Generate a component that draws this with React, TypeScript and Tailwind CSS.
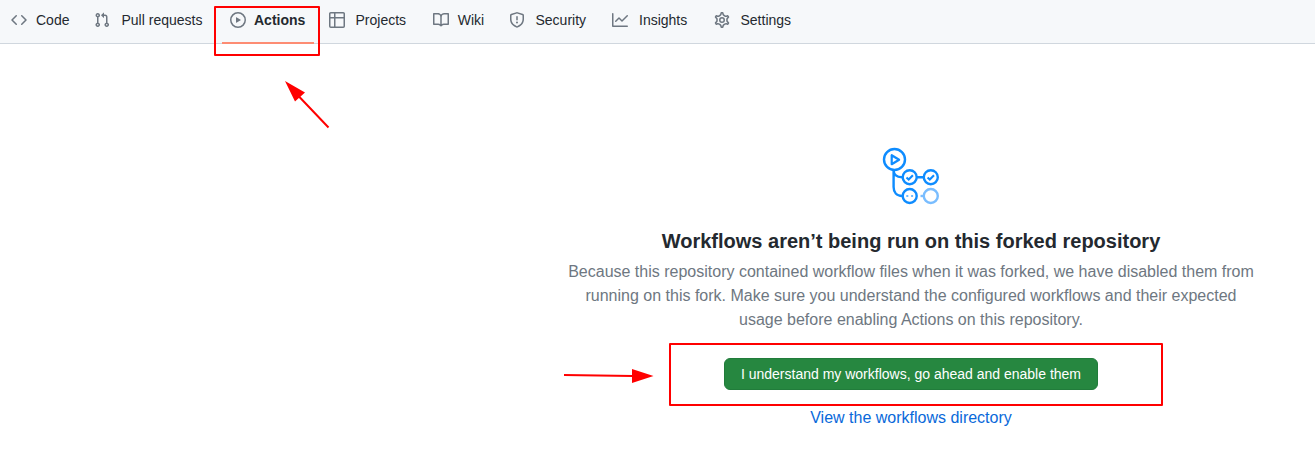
import React from "react";

const PATHS = {
  code: "M4.72 3.22a.75.75 0 011.06 1.06L2.06 8l3.72 3.72a.75.75 0 11-1.06 1.06L.47 8.53a.75.75 0 010-1.06l4.25-4.25zm6.56 0a.75.75 0 10-1.06 1.06L13.94 8l-3.72 3.72a.75.75 0 101.06 1.06l4.25-4.25a.75.75 0 000-1.06l-4.25-4.25z",
  pull: "M7.177 3.073L9.573.677A.25.25 0 0110 .854v4.792a.25.25 0 01-.427.177L7.177 3.427a.25.25 0 010-.354zM3.75 2.5a.75.75 0 100 1.5.75.75 0 000-1.5zm-2.25.75a2.25 2.25 0 113 2.122v5.256a2.251 2.251 0 11-1.5 0V5.372A2.25 2.25 0 011.5 3.25zM11 2.5h-1V4h1a1 1 0 011 1v5.628a2.251 2.251 0 101.5 0V5A2.5 2.5 0 0011 2.5zm1 10.25a.75.75 0 111.5 0 .75.75 0 01-1.5 0zM3.75 12a.75.75 0 100 1.5.75.75 0 000-1.5z",
  play: "M1.5 8a6.5 6.5 0 1113 0 6.5 6.5 0 01-13 0zM8 0a8 8 0 100 16A8 8 0 008 0zM6.379 5.227A.25.25 0 006 5.442v5.117a.25.25 0 00.379.214l4.264-2.559a.25.25 0 000-.428L6.379 5.227z",
  table:
    "M0 1.75C0 .784.784 0 1.75 0h12.5C15.216 0 16 .784 16 1.75v12.5A1.75 1.75 0 0114.25 16H1.75A1.75 1.75 0 010 14.25V1.75zM1.5 6.5v7.75c0 .138.112.25.25.25H5v-8H1.5zM6.5 6.5v8h7.75a.25.25 0 00.25-.25V6.5h-8zM14.5 5V1.75a.25.25 0 00-.25-.25H6.5V5h8zM5 5V1.5H1.75a.25.25 0 00-.25.25V5H5z",
  book: "M0 1.75A.75.75 0 01.75 1h4.253c1.227 0 2.317.59 3 1.501A3.744 3.744 0 0111.006 1h4.245a.75.75 0 01.75.75v10.5a.75.75 0 01-.75.75h-4.507a2.25 2.25 0 00-1.591.659l-.622.621a.75.75 0 01-1.06 0l-.622-.621A2.25 2.25 0 005.258 13H.75a.75.75 0 01-.75-.75V1.75zm8.755 3a2.25 2.25 0 012.25-2.25H14.5v9h-3.757c-.71 0-1.4.201-1.992.572l.004-7.322zm-1.504 7.324l.004-5.073-.002-2.253A2.25 2.25 0 005.003 2.5H1.5v9h3.757a3.75 3.75 0 011.994.574z",
  shield:
    "M7.467.133a1.75 1.75 0 011.066 0l5.25 1.68A1.75 1.75 0 0115 3.48V7c0 1.566-.32 3.182-1.303 4.682-.983 1.498-2.585 2.813-5.032 3.855a1.7 1.7 0 01-1.33 0c-2.447-1.042-4.049-2.357-5.032-3.855C1.32 10.182 1 8.566 1 7V3.48a1.75 1.75 0 011.217-1.667l5.25-1.68zm.61 1.429a.25.25 0 00-.153 0l-5.25 1.68a.25.25 0 00-.174.238V7c0 1.358.275 2.666 1.057 3.86.784 1.194 2.121 2.34 4.366 3.297a.2.2 0 00.154 0c2.245-.956 3.582-2.104 4.366-3.298C13.225 9.666 13.5 8.36 13.5 7V3.48a.25.25 0 00-.174-.237l-5.25-1.68zM9 10.5a1 1 0 11-2 0 1 1 0 012 0zm-.25-5.75a.75.75 0 10-1.5 0v3a.75.75 0 001.5 0v-3z",
  graph:
    "M1.5 1.75a.75.75 0 00-1.5 0v12.5c0 .414.336.75.75.75h14.5a.75.75 0 000-1.5H1.5V1.75zm14.28 2.53a.75.75 0 00-1.06-1.06L10 7.94 7.53 5.47a.75.75 0 00-1.06 0L3.22 8.72a.75.75 0 001.06 1.06L7 7.06l2.47 2.47a.75.75 0 001.06 0l5.25-5.25z",
};

const GEAR =
  "M7.429 1.525a6.593 6.593 0 011.142 0c.036.003.108.036.137.146l.289 1.105c.147.56.55.967.997 1.189.174.086.341.183.501.29.417.278.97.423 1.53.27l1.102-.303c.11-.03.175.016.195.046.219.31.41.641.573.989.014.031.022.11-.059.19l-.815.806c-.411.406-.562.957-.53 1.456a4.588 4.588 0 010 .582c-.032.499.119 1.05.53 1.456l.815.806c.08.08.073.159.059.19a6.494 6.494 0 01-.573.99c-.02.029-.086.074-.195.045l-1.103-.303c-.559-.153-1.112-.008-1.529.27-.16.107-.327.204-.5.29-.449.222-.851.628-.998 1.189l-.289 1.105c-.029.11-.101.143-.137.146a6.613 6.613 0 01-1.142 0c-.036-.003-.108-.037-.137-.146l-.289-1.105c-.147-.56-.55-.967-.997-1.189a4.502 4.502 0 01-.501-.29c-.417-.278-.97-.423-1.53-.27l-1.102.303c-.11.03-.175-.016-.195-.046a6.492 6.492 0 01-.573-.989c-.014-.031-.022-.11.059-.19l.815-.806c.411-.406.562-.957.53-1.456a4.587 4.587 0 010-.582c.032-.499-.119-1.05-.53-1.456l-.815-.806c-.08-.08-.073-.159-.059-.19a6.44 6.44 0 01.573-.99c.02-.029.086-.075.195-.045l1.103.303c.559.153 1.112.008 1.529-.27.16-.107.327-.204.5-.29.449-.222.851-.628.998-1.189l.289-1.105c.029-.11.101-.143.137-.146z";

type IconName = keyof typeof PATHS | "gear";

function Icon({ name }: { name: IconName }) {
  return (
    <svg viewBox="0 0 16 16" className="size-4 shrink-0 text-[#6e7781]" fill="currentColor">
      {name === "gear" ? (
        <g fill="none" stroke="currentColor" strokeWidth="1.4">
          <path d={GEAR} transform="translate(8 8) scale(1.1) translate(-8 -8)" />
          <circle cx="8" cy="8" r="2.25" strokeWidth="1.5" />
        </g>
      ) : (
        <path fillRule="evenodd" d={PATHS[name]} />
      )}
    </svg>
  );
}

const TABS: { name: IconName; label: string; box: string; active?: boolean }[] = [
  { name: "code", label: "Code", box: "w-[83px] gap-[9px]" },
  { name: "pull", label: "Pull requests", box: "w-[136px] gap-[11.5px]" },
  { name: "play", label: "Actions", box: "w-[99px] gap-2", active: true },
  { name: "table", label: "Projects", box: "w-[104px] gap-[10.5px]" },
  { name: "book", label: "Wiki", box: "w-[76px] gap-[8.75px]" },
  { name: "shield", label: "Security", box: "w-[103px] gap-[10.5px]" },
  { name: "graph", label: "Insights", box: "w-[102px] gap-[11px]" },
  { name: "gear", label: "Settings", box: "w-[90px] gap-[10.5px]" },
];

function WorkflowLogo() {
  return (
    <svg className="h-[58px] w-[58px]" viewBox="882 147 58 58" fill="none" stroke="#0e8cff" strokeWidth="2.4">
      <circle cx="894.5" cy="159.5" r="10.5" />
      <path d="M891.7 155.2v9l7.400-4.500z" strokeLinejoin="round" strokeWidth="2.2" />
      <path d="M893.6 170v17c0 5.5 3 9 8.5 9M893.6 170c0 4.500 3 7.200 8.500 7.200M917 177.200h6.500" />
      <circle cx="909.7" cy="177.200" r="7" />
      <circle cx="930.800" cy="177.200" r="7" />
      <circle cx="909.700" cy="196" r="7" />
      <path d="M906.500 177.500l2.200 2.100 4.200-4.300M927.600 177.500l2.200 2.100 4.200-4.300" strokeWidth="2.100" />
      <path d="M906.300 196h2M911.100 196h2" strokeWidth="2" opacity=".6" />
      <g stroke="#79bdff">
        <circle cx="930.800" cy="196" r="7" />
        <path d="M920.500 196h3" />
      </g>
    </svg>
  );
}

export default function App() {
  return (
    <div className="relative h-[464px] w-[1315px] overflow-hidden bg-white font-['Liberation_Sans',Arial,sans-serif]">
      <nav className="flex h-11 border-b border-[#d0d7de] bg-[#f6f8fa] pl-[11px]">
        {TABS.map((t) => (
          <div
            key={t.label}
            className={`relative flex h-10 shrink-0 items-center whitespace-nowrap text-sm text-[#24292f] ${t.box} ${t.active ? "font-bold" : ""}`}
          >
            <Icon name={t.name} />
            <span>{t.label}</span>
            {t.active && <span className="absolute -left-2 top-[42px] h-0.5 w-[92px] bg-[#fd8c73]" />}
          </div>
        ))}
      </nav>

      <main className="ml-[563px] flex w-[696px] flex-col items-center pt-[103px] text-center">
        <WorkflowLogo />
        <h1 className="mt-[21px] text-xl leading-[30px] font-bold text-[#24292f]">
          Workflows aren’t being run on this forked repository
        </h1>
        <p className="mt-1 text-base text-[#6e7781]">
          Because this repository contained workflow files when it was forked, we have disabled them from
          <br />
          running on this fork. Make sure you understand the configured workflows and their expected
          <br />
          usage before enabling Actions on this repository.
        </p>
        <button className="mt-[26px] h-8 w-[374px] rounded-md border border-[#217c3b] bg-[#268740] text-sm text-white">
          I understand my workflows, go ahead and enable them
        </button>
        <a className="mt-4 text-base leading-6 text-[#0969da]">View the workflows directory</a>
      </main>

      <svg className="pointer-events-none absolute inset-0 h-[464px] w-[1315px]" fill="none" stroke="#f00" strokeWidth="2" strokeLinejoin="round">
        <rect x="215" y="7" width="104" height="48" />
        <rect x="670" y="344" width="492" height="61" />
        <path d="M328.500 127.500L299 96.500M564 375l69 1" />
        <path d="M285 81l20 11.500L295 101.500zM632 369v14l21.500-7z" fill="#f00" stroke="none" />
      </svg>
    </div>
  );
}
